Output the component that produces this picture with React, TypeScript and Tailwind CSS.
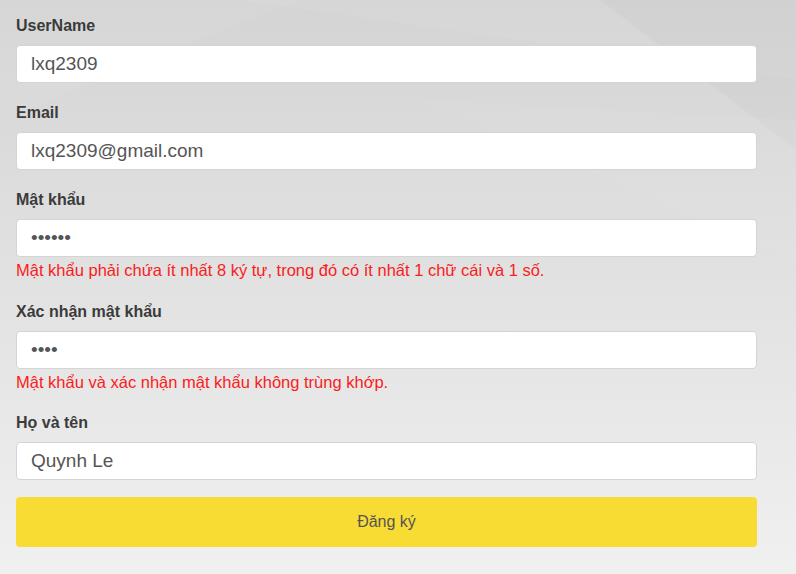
import { useState } from "react";

const Field = ({
  label,
  type = "text",
  value,
  error,
}: {
  label: string;
  type?: string;
  value: string;
  error?: string;
}) => {
  const [val, setVal] = useState(value);
  return (
    <div className="mb-[20px]">
      <label className="block text-[16px] leading-[20px] font-bold text-[#3b3b3b] mb-[9px]">
        {label}
      </label>
      <input
        type={type}
        value={val}
        onChange={(e) => setVal(e.target.value)}
        className="block w-full h-[38px] px-[14px] rounded-[4px] border border-[#d4d4d4] bg-white text-[19px] text-[#555] outline-none"
      />
      {error && (
        <p className="pt-[3px] pb-[2px] text-[16.5px] leading-[20px] text-[#fa1c1c]">
          {error}
        </p>
      )}
    </div>
  );
};

export default function App() {
  return (
    <div
      className="min-h-screen w-full bg-gradient-to-b from-[#d4d4d4] to-[#f0f0f0] relative overflow-hidden"
      style={{ fontFamily: '"Liberation Sans", Arial, sans-serif' }}
    >
      {/* faint geometric background */}
      <svg
        className="absolute inset-0 w-full h-full pointer-events-none"
        viewBox="0 0 796 574"
        preserveAspectRatio="none"
      >
        <polygon points="240,0 800,0 800,80" fill="#ffffff" opacity="0.06" />
        <polygon points="600,0 796,150 796,0" fill="#000000" opacity="0.02" />
        <polygon points="0,120 300,0 0,0" fill="#ffffff" opacity="0.05" />
        <polygon points="420,100 796,260 796,120" fill="#ffffff" opacity="0.05" />
      </svg>
      <form
        className="relative pt-[16px] pl-[16px] pr-[39px]"
        onSubmit={(e) => e.preventDefault()}
      >
        <Field label="UserName" value="lxq2309" />
        <Field label="Email" value="lxq2309@gmail.com" />
        <Field
          label="Mật khẩu"
          type="password"
          value="123456"
          error="Mật khẩu phải chứa ít nhất 8 ký tự, trong đó có ít nhất 1 chữ cái và 1 số."
        />
        <Field
          label="Xác nhận mật khẩu"
          type="password"
          value="1234"
          error="Mật khẩu và xác nhận mật khẩu không trùng khớp."
        />
        <div className="-mt-[1px] -mb-[3px]">
          <Field label="Họ và tên" value="Quynh Le" />
        </div>
        <button
          type="submit"
          className="block w-full h-[50px] rounded-[4px] bg-[#f9dc33] text-[16px] text-[#555]"
        >
          Đăng ký
        </button>
      </form>
    </div>
  );
}
